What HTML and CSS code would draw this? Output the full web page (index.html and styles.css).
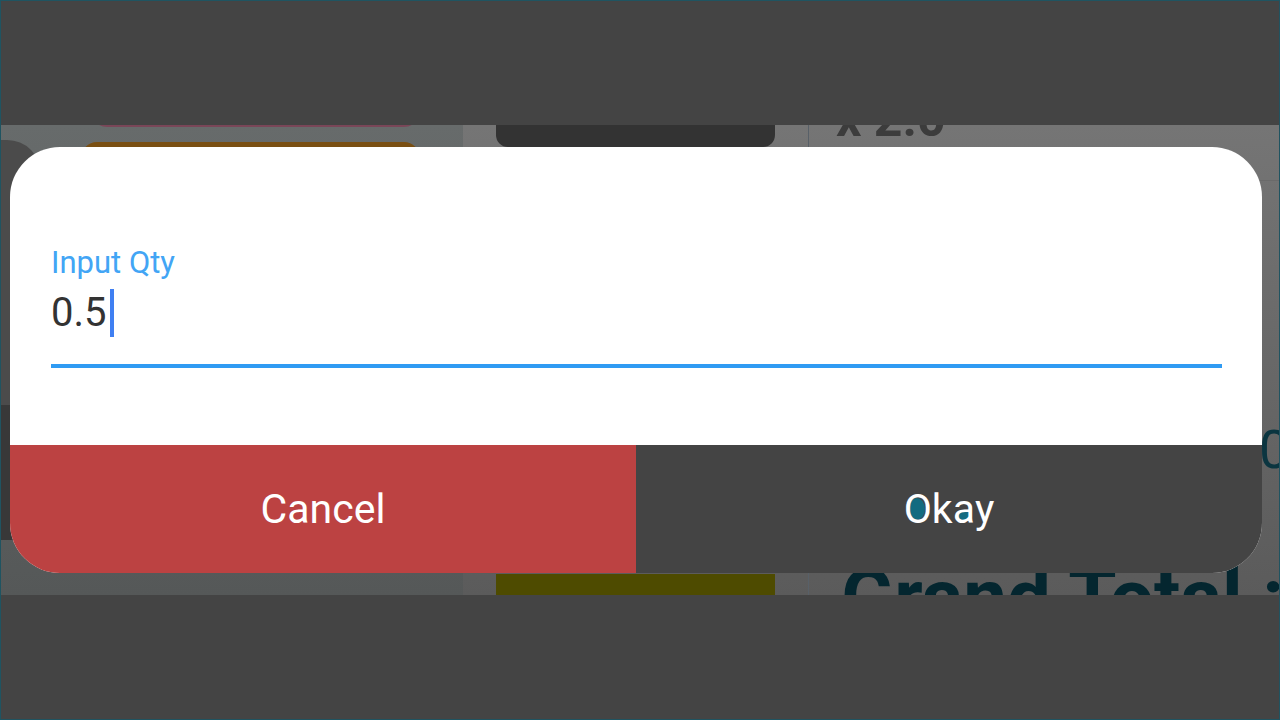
FILE: index.html
```html
<!DOCTYPE html>
<html lang="en">
<head>
    <meta charset="UTF-8">
    <meta name="viewport" content="width=device-width, initial-scale=1.0">
    <title>Input Qty</title>
    <link rel="stylesheet" href="styles.css">
</head>
<body>

    <div class="bar-top"></div>

    <main class="screen">

        <!-- dimmed app behind the dialog -->
        <div class="col-left">
            <div class="rail">
                <div class="rail-top"></div>
                <div class="rail-mid"></div>
            </div>
            <div class="cards">
                <div class="card card-pink"></div>
                <div class="card card-orange"></div>
            </div>
        </div>
        <div class="gutter"></div>
        <div class="col-mid">
            <div class="mid-top"></div>
            <div class="mid-bottom"></div>
        </div>
        <div class="gutter"></div>
        <div class="col-right">
            <div class="qty-line">x 2.0</div>
            <div class="total-value">0.00</div>
            <div class="grand-total">Grand Total :</div>
        </div>

        <!-- dialog -->
        <div class="dialog">
            <div class="dialog-body">
                <label class="field-label" for="qty">Input Qty</label>
                <div class="field-value">
                    <span id="qty">0.5</span><span class="caret"></span>
                </div>
                <div class="field-line"></div>
            </div>
            <div class="dialog-actions">
                <button class="btn btn-cancel">Cancel</button>
                <button class="btn btn-okay"><span class="ink-o">O</span>k<span class="ink-a">a</span>y</button>
            </div>
        </div>

    </main>

    <div class="bar-bottom"></div>

</body>
</html>
```

FILE: styles.css
```css
* {
    box-sizing: border-box;
}

html, body {
    height: 100%;
}

body {
    margin: 0;
    width: 1280px;
    height: 720px;
    overflow: hidden;
    display: flex;
    flex-direction: column;
    background-color: #444444;
    border: 1px solid #1f5461;
    font-family: 'Roboto', 'Liberation Sans', sans-serif;
}

.bar-top {
    height: 124px;
    flex-shrink: 0;
}

.bar-bottom {
    flex: 1;
}

/* app screen */

.screen {
    position: relative;
    height: 470px;
    flex-shrink: 0;
    display: flex;
    overflow: hidden;
    background: linear-gradient(#757575, #5b5b5b);
}

.col-left {
    width: 462px;
    flex-shrink: 0;
    display: flex;
    background: linear-gradient(#676b6b, #555858);
}

.rail {
    width: 40px;
    padding-top: 15px;
}

.rail-top {
    height: 265px;
    background-color: #4b4b4b;
    border-top-right-radius: 34px;
}

.rail-mid {
    height: 135px;
    background-color: #383838;
}

.cards {
    flex: 1;
    margin: 0 43px 0 40px;
}

.card-pink {
    height: 40px;
    margin: -38px 0 0 10px;
    background-color: #7a4658;
    border-radius: 0 0 16px 16px;
}

.card-orange {
    height: 120px;
    margin-top: 15px;
    background-color: #7a4f12;
    border-radius: 16px 16px 0 0;
}

.gutter {
    width: 33px;
    flex-shrink: 0;
}

.col-mid {
    width: 279px;
    flex-shrink: 0;
    display: flex;
    flex-direction: column;
    justify-content: space-between;
}

.mid-top {
    height: 22px;
    background-color: #333333;
    border-radius: 0 0 12px 12px;
}

.mid-bottom {
    height: 21px;
    background-color: #4e4b00;
}

.col-right {
    flex: 1;
    min-width: 0;
    border-left: 1px solid #586068;
    white-space: nowrap;
}

.qty-line {
    height: 87px;
    margin-top: -31px;
    padding-left: 27px;
    border-bottom: 1px solid #6a6a6a;
    color: #3c3c3c;
    font-size: 50px;
    font-weight: bold;
    line-height: 1;
}

.total-value {
    margin-top: 242px;
    padding-left: 450px;
    font-size: 54px;
    line-height: 1;
    color: #0b3540;
}

.grand-total {
    margin-top: 82px;
    padding-left: 32px;
    font-size: 78px;
    font-weight: bold;
    line-height: 1;
    color: #04262f;
}

/* dialog */

.dialog {
    position: absolute;
    left: 9px;
    top: 22px;
    width: 1252px;
    height: 426px;
    display: flex;
    flex-direction: column;
    background-color: #fff;
    border-radius: 50px;
    overflow: hidden;
}

.dialog-body {
    height: 298px;
    padding: 98px 40px 0 41px;
}

.field-label {
    display: block;
    height: 35px;
    color: #42a5f5;
    font-size: 31px;
    line-height: 35px;
}

.field-value {
    display: flex;
    align-items: center;
    margin-top: 9px;
    height: 48px;
    color: #333;
    font-size: 40px;
    line-height: 48px;
}

.caret {
    width: 4px;
    height: 48px;
    margin-left: 3px;
    background-color: #3f7ff2;
}

.field-line {
    height: 4px;
    margin-top: 27px;
    background-color: #2f9bf3;
}

.dialog-actions {
    flex: 1;
    display: flex;
}

.btn {
    flex: 1;
    border: none;
    margin: 0;
    padding: 0;
    color: #fff;
    font-family: 'Roboto', 'Liberation Sans', sans-serif;
    font-size: 41px;
    line-height: 40px;
}

.btn-cancel {
    background-color: #bc4242;
}

.btn-okay {
    background-color: #444444;
}

/* teal fill showing through the counters */
.ink-o,
.ink-a {
    position: relative;
    z-index: 0;
    display: inline-block;
}

.ink-o::before,
.ink-a::before {
    content: '';
    position: absolute;
    z-index: -1;
    background-color: #136b80;
    border-radius: 50%;
}

.ink-o::before {
    left: 4px;
    top: 9px;
    width: 17px;
    height: 22px;
}

.ink-a::before {
    left: 3px;
    top: 21px;
    width: 13px;
    height: 11px;
}
```
